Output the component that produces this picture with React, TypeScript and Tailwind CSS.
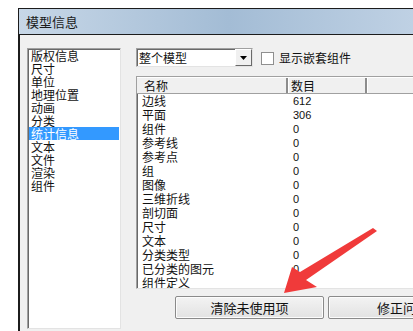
const leftItems = [
  "版权信息",
  "尺寸",
  "单位",
  "地理位置",
  "动画",
  "分类",
  "统计信息",
  "文本",
  "文件",
  "渲染",
  "组件",
];

const rows = [
  ["边线", "612"],
  ["平面", "306"],
  ["组件", "0"],
  ["参考线", "0"],
  ["参考点", "0"],
  ["组", "0"],
  ["图像", "0"],
  ["三维折线", "0"],
  ["剖切面", "0"],
  ["尺寸", "0"],
  ["文本", "0"],
  ["分类类型", "0"],
  ["已分类的图元", "0"],
  ["组件定义", "0"],
];

const cjk = "font-['Noto_Sans_CJK_SC','Noto_Sans',sans-serif]";

const App = () => {
  return (
    <div className={`relative w-[413px] h-[331px] overflow-hidden bg-white text-[#111] ${cjk}`}>
      <div className="ml-[18px] mt-[8px] h-[323px] w-[420px] flex flex-col border-l border-t border-[#1c1c1c]">
        {/* title bar */}
        <div className="h-[25px] flex items-center pl-[7px] bg-gradient-to-r from-[#c7d7e7] via-[#a3bcd5] to-[#c3d4e6]">
          <span className="text-[13px] leading-none text-[#1b1b1b]">模型信息</span>
        </div>

        <div className="flex flex-1">
          <div className="w-[4px] bg-gradient-to-b from-[#b3c7db] via-[#7f8b97] to-[#8d8677]" />
          <div className="flex-1 flex border-l border-t border-[#1c1c1c] bg-[#f0f0f0] pt-[13px] pl-[7px]">
            {/* left list */}
            <div className="w-[94px] h-[281px] bg-white border border-t-[#a0a0a0] border-l-[#a0a0a0] border-r-[#e3e3e3] border-b-[#e3e3e3] shadow-[inset_1px_1px_0_#696969] pl-[1px] pr-[1px]">
              {leftItems.map((item, index) => (
                <div
                  key={index}
                  className={`h-[13px] leading-[13px] text-[12px] pl-[2px] ${
                    index === 6 ? "bg-[#3399ff] text-white" : ""
                  }`}
                >
                  {item}
                </div>
              ))}
            </div>

            {/* right side */}
            <div className="ml-[15px] flex flex-col">
              <div className="flex items-center h-[19px]">
                <div className="w-[117px] h-[19px] flex bg-white border border-t-[#a0a0a0] border-l-[#a0a0a0] border-r-[#e3e3e3] border-b-[#e3e3e3] shadow-[inset_1px_1px_0_#696969]">
                  <span className="flex-1 pl-[2px] text-[12px] leading-[17px]">整个模型</span>
                  <div className="w-[17px] h-[17px] flex items-center justify-center bg-[#f0f0f0] border border-t-[#fff] border-l-[#fff] border-r-[#696969] border-b-[#696969]">
                    <svg width="7" height="4" viewBox="0 0 7 4">
                      <path d="M0 0H7L3.5 4Z" fill="#000" />
                    </svg>
                  </div>
                </div>
                <div className="ml-[8px] w-[13px] h-[13px] mt-[1px] bg-white border border-[#8f8f8f]" />
                <span className="ml-[5px] text-[12px] leading-none">显示嵌套组件</span>
              </div>

              {/* list view */}
              <div className="mt-[9px] w-[290px] h-[213px] overflow-hidden bg-white border border-t-[#a0a0a0] border-l-[#a0a0a0] border-r-[#e3e3e3] border-b-[#e3e3e3] shadow-[inset_1px_1px_0_#696969]">
                <div className="flex h-[17px] bg-[#f0f0f0] border-b border-[#a0a0a0] border-t border-t-[#fff]">
                  <div className="w-[151px] pl-[7px] text-[12px] leading-[15px] border-r-2 border-r-[#8c8c8c]">
                    名称
                  </div>
                  <div className="w-[79px] pl-[2px] text-[12px] leading-[15px] border-l border-l-white border-r-2 border-r-[#8c8c8c]">
                    数目
                  </div>
                  <div className="flex-1 border-l border-l-white" />
                </div>
                {rows.map(([name, count], index) => (
                  <div key={index} className="flex h-[14px] items-center">
                    <div className="w-[151px] pl-[5px] text-[12px] leading-[14px]">{name}</div>
                    <div className="w-[79px] pl-[5px] text-[11px] leading-[14px] font-['Liberation_Sans',sans-serif]">
                      {count}
                    </div>
                  </div>
                ))}
              </div>

              {/* buttons */}
              <div className="flex mt-[7px] ml-[39px]">
                <button className="w-[149px] h-[23px] text-[13px] leading-none bg-gradient-to-b from-[#f3f3f3] to-[#e2e2e2] border border-[#8a8a8a] rounded-[2px] shadow-[inset_0_0_0_1px_#fcfcfc]">
                  清除未使用项
                </button>
                <button className="ml-[4px] w-[150px] h-[23px] text-[13px] leading-none bg-gradient-to-b from-[#f3f3f3] to-[#e2e2e2] border border-[#8a8a8a] rounded-[2px] shadow-[inset_0_0_0_1px_#fcfcfc]">
                  修正问题
                </button>
              </div>
            </div>
          </div>
        </div>
      </div>

      {/* red annotation arrow */}
      <svg className="absolute inset-0 pointer-events-none" width="413" height="331" viewBox="0 0 413 331">
        <path
          d="M284 293 L292 267 L300 272 L373 228 L377 231 L306 280 L317 287 Z"
          fill="#f03a3a"
        />
      </svg>
    </div>
  );
};

export default App;
